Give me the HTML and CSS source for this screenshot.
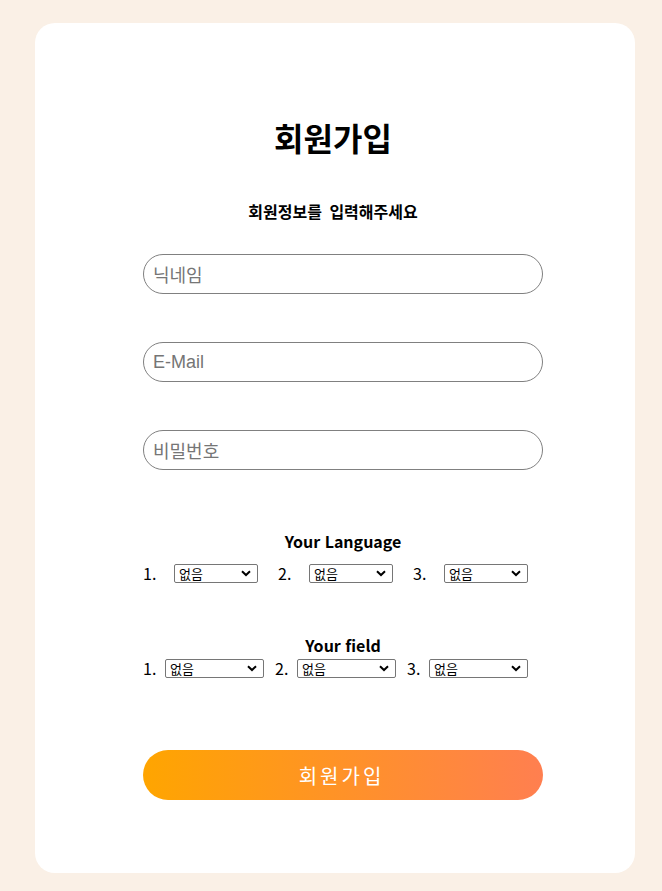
FILE: index.html
```html
<!DOCTYPE html>
<html lang="ko">
<head>
<meta charset="utf-8">
<title>회원가입</title>
<link rel="stylesheet" href="styles.css">
</head>
<body>
<div class="card">
  <h1 class="title">회원가입</h1>
  <p class="subtitle">회원정보를 입력해주세요</p>
  <form class="form">
    <input class="field" type="text" placeholder="닉네임">
    <input class="field field-latin" type="email" placeholder="E-Mail">
    <input class="field" type="password" placeholder="비밀번호">

    <h3 class="group-title group-lang">Your Language</h3>
    <div class="sel-row lang">
      <span class="num">1.</span><select class="sel"><option>없음</option></select>
      <span class="num">2.</span><select class="sel"><option>없음</option></select>
      <span class="num">3.</span><select class="sel"><option>없음</option></select>
    </div>

    <h3 class="group-title group-field">Your field</h3>
    <div class="sel-row fld">
      <span class="num">1.</span><select class="sel"><option>없음</option></select>
      <span class="num">2.</span><select class="sel"><option>없음</option></select>
      <span class="num">3.</span><select class="sel"><option>없음</option></select>
    </div>

    <button class="submit" type="button">회원가입</button>
  </form>
</div>
</body>
</html>
```
FILE: styles.css
```css
* { box-sizing: border-box; }
html, body { margin: 0; padding: 0; }
body {
  background: #faf0e6;
  font-family: "Noto Sans CJK KR", "Liberation Sans", sans-serif;
  color: #000;
  padding-top: 23px;
  height: 891px;
  overflow: hidden;
}
.card {
  width: 600px;
  margin-left: 35px;
  background: #fff;
  border-radius: 20px;
  padding: 93px 0 73px 0;
}
.title {
  margin: 0;
  font-size: 32px;
  line-height: 42px;
  font-weight: 700;
  text-align: center;
  padding-right: 4px;
}
.subtitle {
  margin: 43px 0 0;
  font-size: 16px;
  line-height: 20px;
  font-weight: 700;
  text-align: center;
  word-spacing: 3px;
  padding-right: 4px;
}
.form {
  display: flex;
  flex-direction: column;
  width: 400px;
  margin: 33px 0 0 108px;
}
.field {
  width: 400px;
  height: 40px;
  border: 1px solid #808080;
  border-radius: 20px;
  padding: 0 9px;
  font-family: "Noto Sans CJK KR", "Liberation Sans", sans-serif;
  font-size: 18px;
  outline: none;
  margin: 0 0 48px 0;
  background: #fff;
}
.field::placeholder { color: #767676; }
.field-latin { font-family: "Liberation Sans", "Noto Sans CJK KR", sans-serif; }
.field-latin::placeholder { color: #757575; }
.group-title {
  margin: 0;
  font-size: 16px;
  line-height: 20px;
  font-weight: 700;
  text-align: center;
}
.group-lang { margin-top: 13px; }
.group-field { margin-top: 52px; }
.sel-row {
  display: flex;
  align-items: center;
  height: 20px;
  margin-top: 12px;
}
.sel-row.fld { margin-top: 3px; }
.num {
  font-size: 16px;
  line-height: 20px;
  font-weight: 400;
  font-family: "Noto Sans CJK KR", "Liberation Sans", sans-serif;
}
.sel {
  -webkit-appearance: none;
  appearance: none;
  height: 19px;
  border: 1px solid #767676;
  border-radius: 2px;
  background-color: #fff;
  background-image: url("data:image/svg+xml;utf8,<svg xmlns='http://www.w3.org/2000/svg' width='10' height='7' viewBox='0 0 10 7'><path d='M1 1.2 L5 5 L9 1.2' fill='none' stroke='black' stroke-width='2'/></svg>");
  background-repeat: no-repeat;
  background-position: right 6px center;
  font-family: "Noto Sans CJK KR", sans-serif;
  font-size: 13px;
  line-height: 17px;
  padding: 0 0 0 4px;
  color: #000;
}
.lang .num { width: 31px; }
.lang .sel { width: 84px; margin-right: 20px; }
.fld .num { width: 22px; }
.fld .sel { width: 99px; margin-right: 11px; }
.sel:last-child { margin-right: 0; }
.submit {
  margin-top: 72px;
  width: 400px;
  height: 50px;
  border: none;
  border-radius: 25px;
  background: linear-gradient(to right, #ffa500, #ff7f50);
  color: #fff;
  font-family: "Noto Sans CJK KR", sans-serif;
  font-size: 20px;
  letter-spacing: 3px;
  padding-left: 3px;
  cursor: pointer;
}
```
